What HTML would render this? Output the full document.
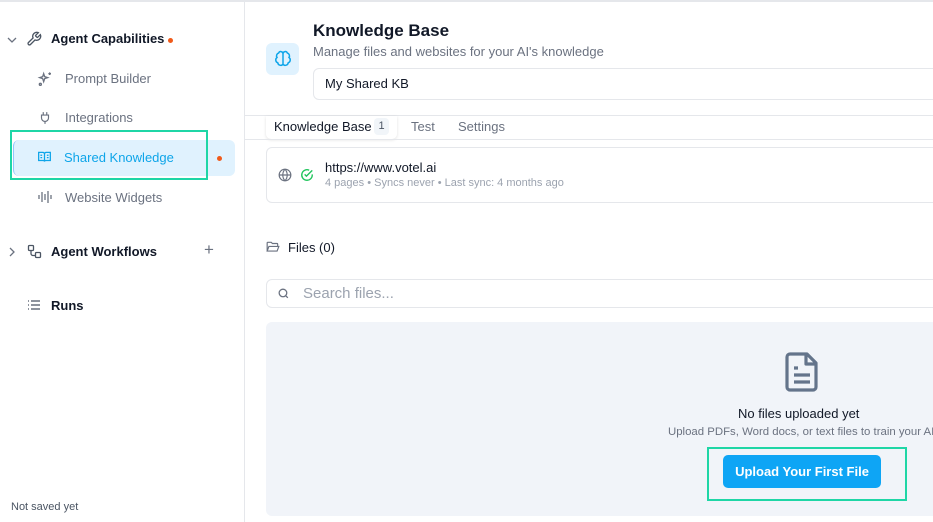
<!DOCTYPE html>
<html><head><meta charset="utf-8"><style>
*{box-sizing:border-box;margin:0;padding:0}
body{width:933px;height:522px;overflow:hidden;background:#fff;font-family:"Liberation Sans",sans-serif;position:relative;color:#111827}
.a{position:absolute}
.side{left:0;top:0;width:245px;height:522px;border-right:1px solid #e5e7eb;border-top:2px solid #e5e7eb}
.t{position:absolute;white-space:nowrap}
svg{position:absolute}
</style></head><body>
<div class="a" style="left:0;top:0;width:933px;height:2px;background:#e5e7eb"></div>
<div class="a side"></div>
<!-- sidebar -->
<svg style="left:6px;top:34px" width="12" height="12" viewBox="0 0 12 12"><path d="M2 4l4 4 4-4" stroke="#6b7280" stroke-width="1.3" fill="none"/></svg>
<svg style="left:26px;top:31px" width="16" height="16" viewBox="0 0 24 24" fill="none" stroke="#4b5563" stroke-width="2"><path d="M14.7 6.3a1 1 0 000 1.4l1.6 1.6a1 1 0 001.4 0l3.8-3.8a6 6 0 01-7.9 7.9l-6.9 6.9a2.1 2.1 0 01-3-3l6.9-6.9a6 6 0 017.9-7.9z"/></svg>
<div class="t" style="left:51px;top:31px;font-size:13px;font-weight:bold">Agent Capabilities</div>
<div class="a" style="left:168px;top:38px;width:5px;height:5px;border-radius:50%;background:#f05a1a"></div>
<svg style="left:37px;top:71px" width="16" height="16" viewBox="0 0 24 24" fill="none" stroke="#6b7280" stroke-width="2"><path d="M10 4l1.5 4.5L16 10l-4.5 1.5L10 16l-1.5-4.5L4 10l4.5-1.5z"/><path d="M19 2v4M17 4h4"/><circle cx="5" cy="20" r="1.5"/></svg>
<div class="t" style="left:65px;top:71px;font-size:13px;color:#6b7280">Prompt Builder</div>
<svg style="left:38px;top:110px" width="14" height="16" viewBox="0 0 24 24" fill="none" stroke="#6b7280" stroke-width="2"><path d="M9 2v5M15 2v5M6 7h12v5a6 6 0 01-12 0zM12 18v4"/></svg>
<div class="t" style="left:65px;top:110px;font-size:13px;color:#6b7280">Integrations</div>
<div class="a" style="left:13px;top:140px;width:222px;height:36px;background:#e0f2fe;border-radius:6px;border-left:1px solid #93c5fd"></div>
<div class="a" style="left:10px;top:130px;width:198px;height:50px;border:2px solid #1fd6a6"></div>
<svg style="left:37px;top:150px" width="15" height="14" viewBox="0 0 24 24" fill="none" stroke="#0ea5e9" stroke-width="2.2"><path d="M2 4h7a3 3 0 013 3v13a2 2 0 00-2-2H2zM22 4h-7a3 3 0 00-3 3v13a2 2 0 012-2h8zM5 9h3M5 13h3M16 9h3M16 13h3"/></svg>
<div class="t" style="left:64px;top:150px;font-size:13px;color:#0ea5e9">Shared Knowledge</div>
<div class="a" style="left:217px;top:156px;width:5px;height:5px;border-radius:50%;background:#f05a1a"></div>
<svg style="left:37px;top:190px" width="16" height="14" viewBox="0 0 16 14" stroke="#6b7280" stroke-width="1.3"><path d="M2 5v4M5 2v10M8 4v6M11 1v12M14 5v4"/></svg>
<div class="t" style="left:65px;top:190px;font-size:13px;color:#6b7280">Website Widgets</div>
<svg style="left:6px;top:246px" width="12" height="12" viewBox="0 0 12 12"><path d="M4 2l4 4-4 4" stroke="#6b7280" stroke-width="1.3" fill="none"/></svg>
<svg style="left:27px;top:244px" width="15" height="15" viewBox="0 0 15 15" fill="none" stroke="#4b5563" stroke-width="1.3"><rect x="1.5" y="1.5" width="5" height="5" rx="1"/><rect x="8.5" y="8.5" width="5" height="5" rx="1"/><path d="M4 6.5v3a2 2 0 002 2h2.5"/></svg>
<div class="t" style="left:51px;top:244px;font-size:13px;font-weight:bold">Agent Workflows</div>
<div class="t" style="left:204px;top:240px;font-size:17px;color:#6b7280">+</div>
<svg style="left:27px;top:299px" width="14" height="12" viewBox="0 0 14 12" stroke="#4b5563" stroke-width="1.2"><path d="M1 2h1M1 6h1M1 10h1M4 2h9M4 6h9M4 10h9"/></svg>
<div class="t" style="left:51px;top:298px;font-size:13px;font-weight:bold">Runs</div>
<div class="t" style="left:11px;top:501px;font-size:11px;color:#4b5563">Not saved yet</div>
<!-- header -->
<div class="a" style="left:266px;top:43px;width:33px;height:32px;background:#e0f2fe;border-radius:6px"></div>
<svg style="left:274px;top:50px" width="18" height="18" viewBox="0 0 24 24" fill="none" stroke="#0ea5e9" stroke-width="2"><path d="M12 5a3 3 0 00-5.8-1A4 4 0 004 10a4 4 0 001 7 4 4 0 007 2zM12 5a3 3 0 015.8-1A4 4 0 0120 10a4 4 0 01-1 7 4 4 0 01-7 2zM12 5v14"/></svg>
<div class="t" style="left:313px;top:21px;font-size:17px;font-weight:bold">Knowledge Base</div>
<div class="t" style="left:313px;top:44px;font-size:13px;color:#6b7280">Manage files and websites for your AI's knowledge</div>
<div class="a" style="left:313px;top:68px;width:640px;height:32px;border:1px solid #e5e7eb;border-radius:6px"></div>
<div class="t" style="left:325px;top:76px;font-size:13px">My Shared KB</div>
<div class="a" style="left:245px;top:115px;width:700px;height:1px;background:#e5e7eb"></div>
<div class="a" style="left:266px;top:116px;width:131px;height:23px;background:#fff;border-radius:0 0 5px 5px;box-shadow:0 1px 3px rgba(0,0,0,.12)"></div>
<div class="t" style="left:274px;top:119px;font-size:13px">Knowledge Base</div>
<div class="a" style="left:374px;top:118px;width:15px;height:17px;background:#f1f5f9;border-radius:4px;font-size:11px;color:#4b5563;text-align:center;line-height:17px">1</div>
<div class="t" style="left:411px;top:119px;font-size:13px;color:#6b7280">Test</div>
<div class="t" style="left:458px;top:119px;font-size:13px;color:#6b7280">Settings</div>
<div class="a" style="left:245px;top:139px;width:700px;height:1px;background:#e5e7eb"></div>
<!-- website card -->
<div class="a" style="left:266px;top:147px;width:680px;height:56px;border:1px solid #e5e7eb;border-radius:6px"></div>
<svg style="left:278px;top:168px" width="14" height="14" viewBox="0 0 24 24" fill="none" stroke="#6b7280" stroke-width="2"><circle cx="12" cy="12" r="10"/><path d="M2 12h20M12 2a15 15 0 010 20M12 2a15 15 0 000 20"/></svg>
<svg style="left:300px;top:168px" width="14" height="14" viewBox="0 0 24 24" fill="none" stroke="#22c55e" stroke-width="2.4"><path d="M21 11v1a9 9 0 11-5.3-8.2"/><path d="M8 11l3 3 10-10"/></svg>
<div class="t" style="left:325px;top:160px;font-size:13px">https://www.votel.ai</div>
<div class="t" style="left:325px;top:177px;font-size:11px;color:#9ca3af">4 pages • Syncs never • Last sync: 4 months ago</div>
<!-- files -->
<svg style="left:266px;top:241px" width="14" height="12" viewBox="0 0 24 20" fill="none" stroke="#6b7280" stroke-width="2"><path d="M2 17V3a1 1 0 011-1h6l2 2h8a1 1 0 011 1v3M2 17l3-8h17l-3 8z"/></svg>
<div class="t" style="left:288px;top:240px;font-size:13px">Files (0)</div>
<div class="a" style="left:266px;top:279px;width:680px;height:29px;border:1px solid #e5e7eb;border-radius:6px"></div>
<svg style="left:277px;top:287px" width="13" height="13" viewBox="0 0 24 24" fill="none" stroke="#6b7280" stroke-width="2.4"><circle cx="11" cy="11" r="7"/><path d="M20 20l-4-4"/></svg>
<div class="t" style="left:303px;top:285px;font-size:15px;color:#9ca3af">Search files...</div>
<div class="a" style="left:266px;top:322px;width:680px;height:194px;background:#f1f4f9;border-radius:6px"></div>
<svg style="left:784px;top:351px" width="36" height="42" viewBox="0 0 36 42" fill="none" stroke="#64748b" stroke-width="3.2" stroke-linejoin="round"><path d="M6 3h17l9 9v24a3 3 0 01-3 3H6a3 3 0 01-3-3V6a3 3 0 013-3zM22 3v10h10"/><path d="M10 17h4M10 24h16M10 31h16"/></svg>
<div class="t" style="left:738px;top:406px;font-size:13px">No files uploaded yet</div>
<div class="t" style="left:668px;top:426px;font-size:11.4px;color:#6b7280">Upload PDFs, Word docs, or text files to train your AI</div>
<div class="a" style="left:723px;top:455px;width:158px;height:33px;background:#0ea5f5;border-radius:5px;color:#fff;font-size:13px;font-weight:bold;text-align:center;line-height:33px">Upload Your First File</div>
<div class="a" style="left:707px;top:447px;width:200px;height:54px;border:2px solid #1fd6a6"></div>
</body></html>
